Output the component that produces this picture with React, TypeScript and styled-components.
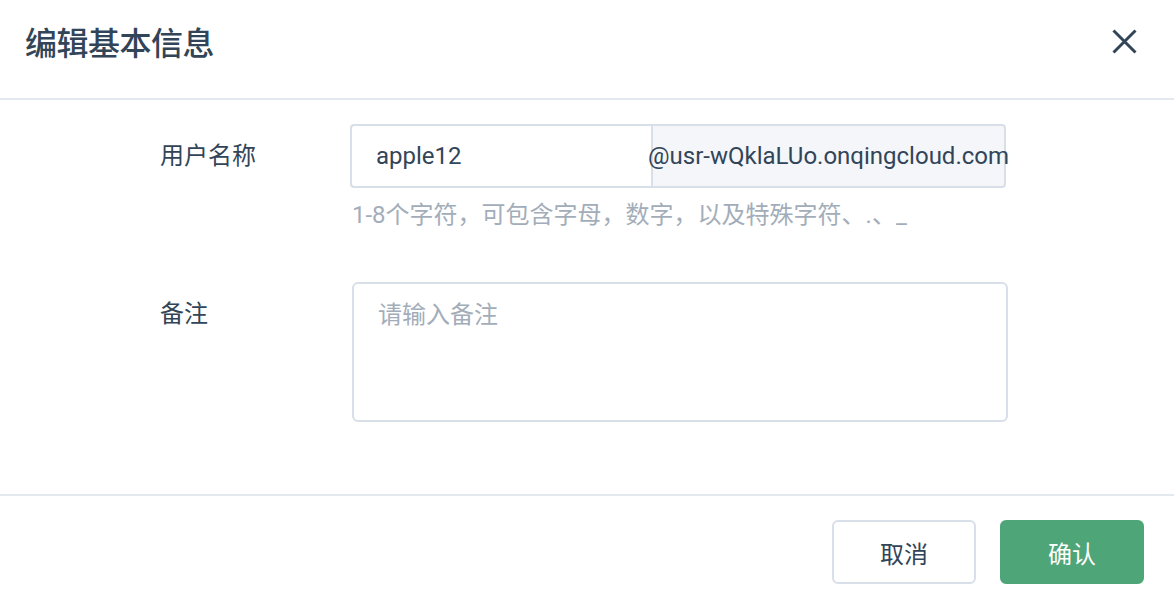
import React from "react"
import styled, { createGlobalStyle } from "styled-components"

const GlobalStyle = createGlobalStyle`
  html, body {
    margin: 0;
    padding: 0;
    background: #ffffff;
  }
  body {
    font-family: "Roboto", "Noto Sans CJK SC", sans-serif;
    color: #324558;
  }
  * {
    box-sizing: border-box;
  }
`

const Dialog = styled.div`
  width: 1174px;
  height: 594px;
  display: flex;
  flex-direction: column;
  background: #ffffff;
`

const Header = styled.div`
  height: 100px;
  display: flex;
  align-items: center;
  justify-content: space-between;
  padding: 0 37px 16px 25px;
  border-bottom: 2px solid #e4e9ef;
`

const Title = styled.h2`
  margin: 0;
  font-size: 32px;
  font-weight: 500;
  color: #324558;
  letter-spacing: -0.5px;
`

const CloseButton = styled.button`
  width: 25px;
  height: 25px;
  padding: 0;
  border: none;
  background: none;
  display: flex;
  align-items: center;
  justify-content: center;
  cursor: pointer;
  color: #324558;
`

const Body = styled.div`
  flex: 1;
  padding: 24px 0 0 160px;
  display: flex;
  flex-direction: column;
  gap: 52px;
  border-bottom: 2px solid #e4e9ef;
`

const Row = styled.div`
  display: flex;
  align-items: flex-start;
`

const Label = styled.div<{ $top: number }>`
  width: 190px;
  flex-shrink: 0;
  padding-top: ${(p) => p.$top}px;
  font-size: 24px;
  line-height: 32px;
  color: #324558;
`

const Field = styled.div`
  display: flex;
  flex-direction: column;
  gap: 12px;
`

const InputGroup = styled.div`
  display: flex;
  height: 64px;
  width: 656px;
`

const TextInput = styled.input`
  width: 301px;
  height: 64px;
  border: 2px solid #d8dfe8;
  border-right: none;
  border-radius: 4px 0 0 4px;
  padding: 0 24px;
  font-family: "Roboto", "Noto Sans CJK SC", sans-serif;
  font-size: 24px;
  color: #324558;
  outline: none;
  background: #ffffff;
`

const Addon = styled.div`
  width: 355px;
  height: 64px;
  border: 2px solid #d8dfe8;
  border-radius: 0 4px 4px 0;
  background: #f4f6fa;
  display: flex;
  align-items: center;
  justify-content: center;
  white-space: nowrap;
  overflow: visible;
  font-size: 24px;
  color: #324558;
`

const Hint = styled.div`
  padding-left: 2px;
  font-size: 24px;
  line-height: 30px;
  color: #a3adb9;
`

const TextArea = styled.textarea`
  width: 656px;
  height: 140px;
  margin-left: 2px;
  border: 2px solid #d8dfe8;
  border-radius: 6px;
  padding: 14px 24px;
  resize: none;
  font-family: "Roboto", "Noto Sans CJK SC", sans-serif;
  font-size: 24px;
  line-height: 34px;
  color: #324558;
  outline: none;

  &::placeholder {
    color: #a3adb9;
  }
`

const Footer = styled.div`
  height: 98px;
  display: flex;
  justify-content: flex-end;
  align-items: flex-start;
  gap: 24px;
  padding: 24px 30px 0 0;
`

const Button = styled.button<{ $primary?: boolean }>`
  width: 144px;
  height: 64px;
  border-radius: 6px;
  border: 2px solid ${(p) => (p.$primary ? "#4ea577" : "#d8dfe8")};
  background: ${(p) => (p.$primary ? "#4ea577" : "#ffffff")};
  color: ${(p) => (p.$primary ? "#ffffff" : "#324558")};
  font-family: "Roboto", "Noto Sans CJK SC", sans-serif;
  font-size: 24px;
  cursor: pointer;
`

export default function App() {
  return (
    <>
      <GlobalStyle />
      <Dialog>
        <Header>
          <Title>编辑基本信息</Title>
          <CloseButton aria-label="close">
            <svg width="25" height="25" viewBox="0 0 25 25">
              <path d="M1.5 1.5 L23.5 23.5 M23.5 1.5 L1.5 23.5" stroke="currentColor" strokeWidth="3" fill="none" />
            </svg>
          </CloseButton>
        </Header>
        <Body>
          <Row>
            <Label $top={16}>用户名称</Label>
            <Field>
              <InputGroup>
                <TextInput defaultValue="apple12" />
                <Addon>@usr-wQklaLUo.onqingcloud.com</Addon>
              </InputGroup>
              <Hint>1-8个字符，可包含字母，数字，以及特殊字符、.、_</Hint>
            </Field>
          </Row>
          <Row>
            <Label $top={16}>备注</Label>
            <TextArea placeholder="请输入备注" />
          </Row>
        </Body>
        <Footer>
          <Button>取消</Button>
          <Button $primary>确认</Button>
        </Footer>
      </Dialog>
    </>
  )
}
